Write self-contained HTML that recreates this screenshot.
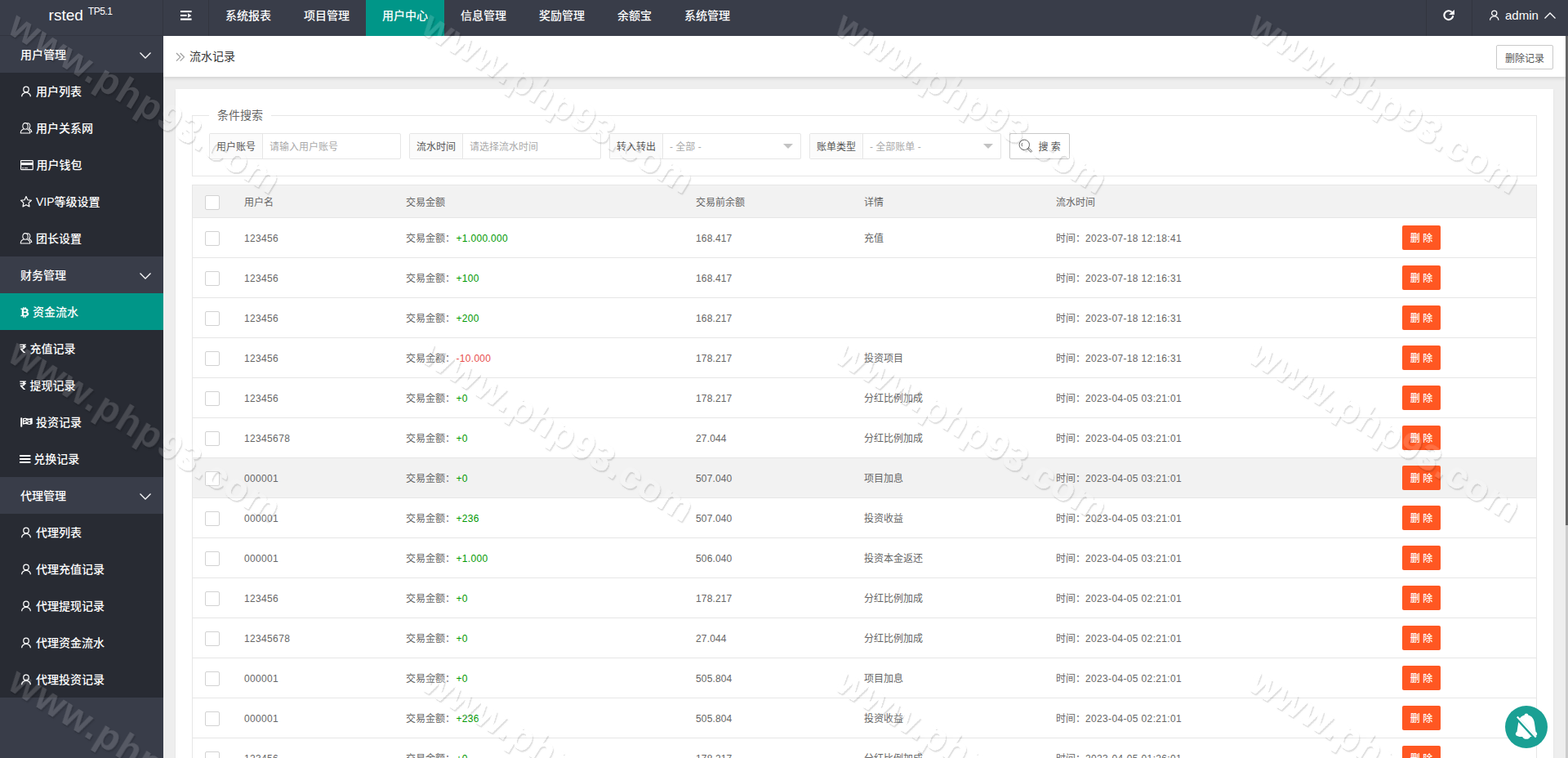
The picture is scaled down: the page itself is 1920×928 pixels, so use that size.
<!DOCTYPE html>
<html lang="zh-CN">
<head>
<meta charset="utf-8">
<title>流水记录</title>
<style>
*{box-sizing:border-box;margin:0;padding:0}
html,body{width:1920px;height:928px;overflow:hidden}
body{font-family:"Liberation Sans","Noto Sans CJK SC",sans-serif;font-size:14px;color:#666;background:#eee;position:relative}
a{text-decoration:none;color:inherit}
ul{list-style:none}
/* header */
.hd{position:absolute;left:0;top:0;width:1920px;height:44px;background:#393D49;z-index:5}
.logo{position:absolute;left:0;top:0;width:200px;padding-right:2px;height:44px;color:#fff;font-size:19px;line-height:38px;text-align:center;border-bottom:1px solid #32353f;border-right:1px solid #32353f}
.logo sup{font-size:12px;position:relative;top:-7px;vertical-align:baseline;margin-left:6px;letter-spacing:-.5px}
.tog{position:absolute;left:200px;top:0;width:56px;height:44px;border-right:1px solid #32353f}
.nav{position:absolute;left:256px;top:0;height:44px;display:flex}
.nav li{font-weight:500;height:44px;line-height:38px;padding:0 20px;color:#fff;font-size:14px}
.nav li.on{background:#009688}
.hr{position:absolute;top:0;height:44px;border-left:1px solid #32353f;color:#fff}
/* side */
.sd{position:absolute;left:0;top:44px;width:200px;height:884px;background:#393D49;z-index:4}
.sd .p{font-weight:500;height:45px;line-height:47px;padding-left:25px;color:#fff;font-size:14px;position:relative}
.sd .c{font-weight:500;height:45px;line-height:47px;padding-left:25px;color:#fff;font-size:14px;background:#282B33;position:relative;white-space:nowrap}
.sd .c.on{background:#009688}
.sd svg{vertical-align:middle;position:relative;top:-1px}
.arr{position:absolute;right:15px;top:16px}
/* main */
.tb{position:absolute;left:200px;top:44px;width:1717px;height:50px;background:#fff;box-shadow:0 2px 4px rgba(0,0,0,.12);z-index:3}
.tb .t{position:absolute;left:32px;top:0;line-height:51px;font-size:14px;color:#333}
.btnp{position:absolute;right:15px;top:11px;height:30px;width:70px;border:1px solid #C9C9C9;border-radius:2px;background:#fff;color:#555;font-size:12px;line-height:32px;text-align:center}
.card{position:absolute;left:215px;top:109px;width:1687px;height:900px;background:#fff;box-shadow:0 1px 2px rgba(0,0,0,.08)}
.fs{position:absolute;left:20px;top:32px;width:1647px;height:75px;border:1px solid #e6e6e6}
.lg{position:absolute;left:20px;top:-11px;padding:0 10px;background:#fff;font-size:14px;line-height:20px;color:#666}
.g{position:absolute;top:21px;height:32px;width:235px;border:1px solid #e6e6e6;border-radius:2px;font-size:12px;line-height:33px}
.g .l{position:absolute;left:0;top:0;width:65px;height:30px;background:#fbfbfb;border-right:1px solid #e6e6e6;text-align:center;color:#555}
.g .i{position:absolute;left:73px;top:0;color:#aaa}
.g .e{position:absolute;right:9px;top:12px;width:0;height:0;border:6px solid transparent;border-top-color:#c2c2c2}
.sb{position:absolute;left:1000px;top:21px;width:74px;height:32px;border:1px solid #C9C9C9;border-radius:2px;font-size:12px;line-height:32px;color:#555;background:#fff}
/* table */
.tbl{position:absolute;left:20px;top:117px;width:1647px;border:1px solid #e6e6e6;border-bottom:0;font-size:12px;color:#666}
.r{position:relative;height:49px;border-bottom:1px solid #e6e6e6;line-height:50px}
.r.h{height:40px;line-height:42px;background:#f2f2f2}
.r.hv{background:#f2f2f2}
.r span{position:absolute;top:0;white-space:nowrap}
.r i.cb{position:absolute;left:15px;top:16px;width:18px;height:18px;border:1px solid #d2d2d2;border-radius:2px;background:#fff}
.r.h i.cb{top:12px}
.c1{left:63px}.c2{left:261px}.c3{left:616px}.c4{left:822px}.c5{left:1057px}
.gr{color:#009900}.rd{color:#e84e4e}
.del{font-weight:500;position:absolute;left:1481px;top:9px;width:47px;height:30px;background:#FF5722;border-radius:2px;color:#fff;font-size:12px;line-height:32px;text-align:center}
.n{letter-spacing:.35px}
.c3.n{letter-spacing:.15px}
b.gr,b.rd{margin-left:1.5px;letter-spacing:.3px}
b{font-weight:normal}
/* scrollbar */
.sc{position:absolute;left:1917px;top:44px;width:3px;height:884px;background:#ccc;z-index:6}
.sc b{display:block;width:3px;height:599px;background:#666}
.bell{position:absolute;left:1843px;top:864px;width:52px;height:52px;border-radius:50%;background:#1AA094;z-index:7}
/* watermark */
.wm{position:absolute;left:0;top:0;width:1920px;height:928px;overflow:hidden;z-index:20;pointer-events:none}

</style>
</head>
<body>
<div class="hd">
  <div class="logo">rsted<sup>TP5.1</sup></div>
  <div class="tog"><svg width="16" height="14" viewBox="0 0 16 14" style="position:absolute;left:21px;top:13px"><rect x="0" y="0" width="13.600" height="2.100" fill="#fff"/><rect x="0" y="4.900" width="7.600" height="2.100" fill="#fff"/><path d="M9.100 3.300l4.300 2.700-4.300 2.700z" fill="#fff"/><rect x="0" y="9.500" width="13.600" height="2.200" fill="#fff"/></svg></div>
  <ul class="nav"><li>系统报表</li><li>项目管理</li><li class="on">用户中心</li><li>信息管理</li><li>奖励管理</li><li>余额宝</li><li>系统管理</li></ul>
  <div class="hr" style="left:1746px;width:56px"><svg width="18" height="18" viewBox="0 0 18 18" style="position:absolute;left:18px;top:8.500px"><path d="M12.600 8.900A5.400 5.400 0 1 1 11 4.600" fill="none" stroke="#fff" stroke-width="2.100" transform="translate(1.600 1.200)"/><path d="M9 8.900L15.900 2.900V8.900z" fill="#fff"/></svg></div>
  <div class="hr" style="left:1802px;width:118px"><svg width="14" height="14" viewBox="0 0 14 14" style="position:absolute;left:19.900px;top:12.100px"><g fill="none" stroke="#fff" stroke-width="1.300" transform="scale(.96)"><circle cx="7" cy="4.350" r="3.250"/><path d="M1.600 13.200a5.400 5 0 0 1 10.800 0"/></g></svg><svg width="16" height="10" viewBox="0 0 16 10" style="position:absolute;left:87px;top:14px"><path d="M1.500 8.500l6.500-6.500 6.500 6.500" fill="none" stroke="#fff" stroke-width="1.300"/></svg><span style="position:absolute;left:40px;top:0;line-height:38px;font-size:15px">admin</span></div>
</div>
<div class="sd">
<div class="p">用户管理<svg width="16" height="10" viewBox="0 0 16 10" style="position:absolute;left:170px;top:19px"><path d="M1.500 1.500l6.500 6.500 6.500-6.500" fill="none" stroke="#fff" stroke-width="1.300"/></svg></div>
<div class="c"><svg width="14" height="16" viewBox="0 0 14 16" style="margin-right:5px"><g fill="none" stroke="#fff" stroke-width="1.250"><circle cx="7" cy="5.450" r="3.250"/><path d="M1.600 14.300a5.400 5 0 0 1 10.800 0"/></g></svg><span>用户列表</span></div>
<div class="c"><svg width="16" height="16" viewBox="0 0 16 16" style="margin-right:4px;margin-left:-1px"><g fill="none" stroke="#fff" stroke-width="1.050" stroke-linejoin="round"><ellipse cx="7" cy="5.400" rx="3.200" ry="3.800"/><path d="M5.300 8.700C3.200 9.400 1.400 10.600 1.200 13.900H12.800C12.600 10.600 10.800 9.400 8.700 8.700"/><path d="M9.400 1.700c2.400-.2 3.700 1.700 3.400 4-.2 1.300-.7 2.100-1.500 2.700 1.900.7 3.300 1.900 3.500 4.100H13.400"/></g></svg><span>用户关系网</span></div>
<div class="c"><svg width="16" height="14" viewBox="0 0 16 14" style="margin-right:4px;margin-left:-.400px"><rect x=".550" y="1.550" width="14.700" height="11.100" rx=".700" fill="none" stroke="#fff" stroke-width="1.150"/><rect x=".600" y="4.100" width="14.600" height="3" fill="#fff"/><rect x="1.900" y="10.300" width="2.300" height=".900" fill="#fff"/><rect x="4.900" y="10.300" width="4.200" height=".900" fill="#fff"/></svg><span>用户钱包</span></div>
<div class="c"><svg width="15" height="15" viewBox="0 0 15 15" style="margin-right:4px"><path d="M7.00 0.60L8.94 4.73L13.47 5.30L10.14 8.42L11.00 12.90L7.00 10.70L3.00 12.90L3.86 8.42L0.53 5.30L5.06 4.73z" fill="none" stroke="#fff" stroke-width="1.200" stroke-linejoin="round"/></svg><span>VIP等级设置</span></div>
<div class="c"><svg width="16" height="16" viewBox="0 0 16 16" style="margin-right:4px;margin-left:-1px"><g fill="none" stroke="#fff" stroke-width="1.050" stroke-linejoin="round"><ellipse cx="7" cy="5.400" rx="3.200" ry="3.800"/><path d="M5.300 8.700C3.200 9.400 1.400 10.600 1.200 13.900H12.800C12.600 10.600 10.800 9.400 8.700 8.700"/><path d="M9.400 1.700c2.400-.2 3.700 1.700 3.400 4-.2 1.300-.7 2.100-1.500 2.700 1.900.7 3.300 1.900 3.500 4.100H13.400"/></g></svg><span>团长设置</span></div>
<div class="p">财务管理<svg width="16" height="10" viewBox="0 0 16 10" style="position:absolute;left:170px;top:19px"><path d="M1.500 1.500l6.500 6.500 6.500-6.500" fill="none" stroke="#fff" stroke-width="1.300"/></svg></div>
<div class="c on"><svg width="11" height="13" viewBox="0 0 11 13" style="margin-right:4px;top:-.400px"><path fill="#fff" transform="scale(.97 .93)" d="M3.4 0h1.3v1.6h1V0H7v1.7c1.7.2 2.9 1 2.9 2.5 0 1-.5 1.8-1.5 2.2 1.4.3 2.2 1.2 2.200 2.500C10.600 10.900 9.200 11.900 7 12.100V14H5.700v-1.800h-1V14H3.400v-1.800H.400v-1.400h.800c.4 0 .6-.2.600-.600V3.600c0-.4-.2-.6-.6-.6H.4V1.600h3zM4.200 3.200v2.700h1.600c1.100 0 1.700-.5 1.700-1.400s-.600-1.300-1.700-1.300zm0 4.200v3.200H6.100c1.300 0 2-.5 2-1.600s-.7-1.600-2-1.600z"/></svg><span>资金流水</span></div>
<div class="c"><svg width="8" height="12" viewBox="0 0 8 12" style="margin-right:4px;margin-left:-.600px;top:-1.400px"><path fill="#fff" transform="scale(.93 .88)" d="M.3.600h8.400L8.200 2.100H6.600c.3.400.5.800.6 1.300h1.500L8.200 4.900H7.200C6.900 6.600 5.500 7.600 3.500 7.800l4.300 4.600H5.300L.9 7.700V6.300h1.600c1.400 0 2.300-.5 2.500-1.400H.3L.8 3.400h4.100C4.600 2.600 3.800 2.100 2.600 2.100H.3z"/></svg><span>充值记录</span></div>
<div class="c"><svg width="8" height="12" viewBox="0 0 8 12" style="margin-right:4px;margin-left:-.600px;top:-1.400px"><path fill="#fff" transform="scale(.93 .88)" d="M.3.600h8.400L8.200 2.100H6.600c.3.400.5.800.6 1.300h1.500L8.200 4.900H7.200C6.900 6.600 5.500 7.600 3.500 7.800l4.300 4.600H5.300L.9 7.700V6.300h1.600c1.400 0 2.300-.5 2.500-1.400H.3L.8 3.400h4.100C4.600 2.600 3.800 2.100 2.600 2.100H.3z"/></svg><span>提现记录</span></div>
<div class="c"><svg width="15" height="12" viewBox="0 0 15 12" style="margin-right:4px;top:-1.300px"><g transform="scale(1 .93)"><rect x=".2" y=".3" width="2" height="12.400" rx=".8" fill="#fff"/><path fill="#fff" fill-rule="evenodd" d="M2.900 1.400c1.600-.900 3-.800 4.500-.2 1.600.6 3.200.800 5 .0.900-.4 2.300-.7 2.300.200V8c0 .500-.300.700-.800.900-1.900.900-3.500.800-5.100.2S5.700 8.200 3.700 9.200c-.4.200-.8 0-.8-.4zM4.100 2.600v1.700c.900-.400 1.800-.5 2.600-.4V2.200c-.9-.2-1.700 0-2.600.400zm5.300.6v1.700c.900.3 1.800.3 2.700 0V3.200c-.9.300-1.800.3-2.700 0zM4.100 5.700v1.800c.9-.4 1.800-.500 2.600-.400V5.300c-.900-.100-1.700 0-2.600.400zm5.300.600v1.800c.900.300 1.800.2 2.700-.100V6.200c-.900.300-1.800.4-2.700.100zM6.700 3.900v1.400c.9.100 1.800.5 2.700 1V4.900c-.9-.5-1.800-.900-2.700-1z"/></g></svg><span>投资记录</span></div>
<div class="c"><svg width="14" height="12" viewBox="0 0 14 12" style="margin-right:3px;margin-left:-.800px"><rect x="0" y="1" width="13.400" height="2" fill="#fff"/><rect x="0" y="5" width="13.400" height="2" fill="#fff"/><rect x="0" y="9" width="13.400" height="2" fill="#fff"/></svg><span>兑换记录</span></div>
<div class="p">代理管理<svg width="16" height="10" viewBox="0 0 16 10" style="position:absolute;left:170px;top:19px"><path d="M1.500 1.500l6.500 6.500 6.500-6.500" fill="none" stroke="#fff" stroke-width="1.300"/></svg></div>
<div class="c"><svg width="14" height="16" viewBox="0 0 14 16" style="margin-right:5px"><g fill="none" stroke="#fff" stroke-width="1.250"><circle cx="7" cy="5.450" r="3.250"/><path d="M1.600 14.300a5.400 5 0 0 1 10.800 0"/></g></svg><span>代理列表</span></div>
<div class="c"><svg width="14" height="16" viewBox="0 0 14 16" style="margin-right:5px"><g fill="none" stroke="#fff" stroke-width="1.250"><circle cx="7" cy="5.450" r="3.250"/><path d="M1.600 14.300a5.400 5 0 0 1 10.800 0"/></g></svg><span>代理充值记录</span></div>
<div class="c"><svg width="14" height="16" viewBox="0 0 14 16" style="margin-right:5px"><g fill="none" stroke="#fff" stroke-width="1.250"><circle cx="7" cy="5.450" r="3.250"/><path d="M1.600 14.300a5.400 5 0 0 1 10.800 0"/></g></svg><span>代理提现记录</span></div>
<div class="c"><svg width="14" height="16" viewBox="0 0 14 16" style="margin-right:5px"><g fill="none" stroke="#fff" stroke-width="1.250"><circle cx="7" cy="5.450" r="3.250"/><path d="M1.600 14.300a5.400 5 0 0 1 10.800 0"/></g></svg><span>代理资金流水</span></div>
<div class="c"><svg width="14" height="16" viewBox="0 0 14 16" style="margin-right:5px"><g fill="none" stroke="#fff" stroke-width="1.250"><circle cx="7" cy="5.450" r="3.250"/><path d="M1.600 14.300a5.400 5 0 0 1 10.800 0"/></g></svg><span>代理投资记录</span></div>
</div>
<div class="tb"><svg width="12" height="12" viewBox="0 0 12 12" style="position:absolute;left:15px;top:19.700px"><path d="M1 1l4.800 4.800-4.800 4.800M5.700 1l4.800 4.800-4.800 4.800" fill="none" stroke="#999" stroke-width="1.100"/></svg><span class="t">流水记录</span><div class="btnp">删除记录</div></div>
<div class="card">
  <div class="fs"><div class="lg">条件搜索</div>
    <div class="g" style="left:20px"><div class="l">用户账号</div><div class="i">请输入用户账号</div></div>
    <div class="g" style="left:265px"><div class="l">流水时间</div><div class="i">请选择流水时间</div></div>
    <div class="g" style="left:510px"><div class="l">转入转出</div><div class="i">- 全部 -</div><div class="e"></div></div>
    <div class="g" style="left:755px"><div class="l">账单类型</div><div class="i">- 全部账单 -</div><div class="e"></div></div>
    <div class="sb"><svg width="18" height="18" viewBox="0 0 18 18" style="position:absolute;left:10.400px;top:5.500px"><g fill="none" stroke="#666" stroke-width="1"><circle cx="7.300" cy="7.300" r="6.200"/><path d="M4.700 5.200a3.600 3.600 0 0 0 0 4"/><path d="M11.500 12.600l1.300-1.300 3.800 3.800-1.300 1.300z"/></g></svg><span style="position:absolute;left:34.5px;top:0">搜 索</span></div>
  </div>
  <div class="tbl">
<div class="r h"><i class="cb"></i><span class="c1">用户名</span><span class="c2">交易金额</span><span class="c3">交易前余额</span><span class="c4">详情</span><span class="c5">流水时间</span></div>
<div class="r"><i class="cb"></i><span class="c1 n">123456</span><span class="c2">交易金额：<b class="gr n">+1.000.000</b></span><span class="c3 n">168.417</span><span class="c4">充值</span><span class="c5">时间：<b class="n">2023-07-18 12:18:41</b></span><div class="del">删 除</div></div>
<div class="r"><i class="cb"></i><span class="c1 n">123456</span><span class="c2">交易金额：<b class="gr n">+100</b></span><span class="c3 n">168.417</span><span class="c4"></span><span class="c5">时间：<b class="n">2023-07-18 12:16:31</b></span><div class="del">删 除</div></div>
<div class="r"><i class="cb"></i><span class="c1 n">123456</span><span class="c2">交易金额：<b class="gr n">+200</b></span><span class="c3 n">168.217</span><span class="c4"></span><span class="c5">时间：<b class="n">2023-07-18 12:16:31</b></span><div class="del">删 除</div></div>
<div class="r"><i class="cb"></i><span class="c1 n">123456</span><span class="c2">交易金额：<b class="rd n">-10.000</b></span><span class="c3 n">178.217</span><span class="c4">投资项目</span><span class="c5">时间：<b class="n">2023-07-18 12:16:31</b></span><div class="del">删 除</div></div>
<div class="r"><i class="cb"></i><span class="c1 n">123456</span><span class="c2">交易金额：<b class="gr n">+0</b></span><span class="c3 n">178.217</span><span class="c4">分红比例加成</span><span class="c5">时间：<b class="n">2023-04-05 03:21:01</b></span><div class="del">删 除</div></div>
<div class="r"><i class="cb"></i><span class="c1 n">12345678</span><span class="c2">交易金额：<b class="gr n">+0</b></span><span class="c3 n">27.044</span><span class="c4">分红比例加成</span><span class="c5">时间：<b class="n">2023-04-05 03:21:01</b></span><div class="del">删 除</div></div>
<div class="r hv"><i class="cb"></i><span class="c1 n">000001</span><span class="c2">交易金额：<b class="gr n">+0</b></span><span class="c3 n">507.040</span><span class="c4">项目加息</span><span class="c5">时间：<b class="n">2023-04-05 03:21:01</b></span><div class="del">删 除</div></div>
<div class="r"><i class="cb"></i><span class="c1 n">000001</span><span class="c2">交易金额：<b class="gr n">+236</b></span><span class="c3 n">507.040</span><span class="c4">投资收益</span><span class="c5">时间：<b class="n">2023-04-05 03:21:01</b></span><div class="del">删 除</div></div>
<div class="r"><i class="cb"></i><span class="c1 n">000001</span><span class="c2">交易金额：<b class="gr n">+1.000</b></span><span class="c3 n">506.040</span><span class="c4">投资本金返还</span><span class="c5">时间：<b class="n">2023-04-05 03:21:01</b></span><div class="del">删 除</div></div>
<div class="r"><i class="cb"></i><span class="c1 n">123456</span><span class="c2">交易金额：<b class="gr n">+0</b></span><span class="c3 n">178.217</span><span class="c4">分红比例加成</span><span class="c5">时间：<b class="n">2023-04-05 02:21:01</b></span><div class="del">删 除</div></div>
<div class="r"><i class="cb"></i><span class="c1 n">12345678</span><span class="c2">交易金额：<b class="gr n">+0</b></span><span class="c3 n">27.044</span><span class="c4">分红比例加成</span><span class="c5">时间：<b class="n">2023-04-05 02:21:01</b></span><div class="del">删 除</div></div>
<div class="r"><i class="cb"></i><span class="c1 n">000001</span><span class="c2">交易金额：<b class="gr n">+0</b></span><span class="c3 n">505.804</span><span class="c4">项目加息</span><span class="c5">时间：<b class="n">2023-04-05 02:21:01</b></span><div class="del">删 除</div></div>
<div class="r"><i class="cb"></i><span class="c1 n">000001</span><span class="c2">交易金额：<b class="gr n">+236</b></span><span class="c3 n">505.804</span><span class="c4">投资收益</span><span class="c5">时间：<b class="n">2023-04-05 02:21:01</b></span><div class="del">删 除</div></div>
<div class="r"><i class="cb"></i><span class="c1 n">123456</span><span class="c2">交易金额：<b class="gr n">+0</b></span><span class="c3 n">178.217</span><span class="c4">分红比例加成</span><span class="c5">时间：<b class="n">2023-04-05 01:26:01</b></span><div class="del">删 除</div></div>
</div>
</div>
<div class="sc"><b></b></div>
<div class="bell"><svg width="52" height="52" viewBox="0 0 52 52" style="display:block"><path fill="#fff" d="M26 9.600c1.300 0 2.200.9 2.300 2 4.200 1 6.900 4.500 7.600 9.300l1.600 10.900c.8.700 1.700 1.700 1.700 3 0 1.500-1.700 2.500-4.700 3.100h-3.600c-1 1.900-2.900 2.900-4.900 2.900s-3.900-1-4.900-2.900h-3.600c-3-.6-4.700-1.600-4.700-3.100 0-1.300.9-2.300 1.700-3l1.600-10.900c.7-4.800 3.400-8.300 7.600-9.300.1-1.100 1-2 2.300-2z"/><path d="M14 14.500L37 39.500" stroke="#1AA094" stroke-width="4.200"/><path d="M14.800 13.600L37.800 38.600" stroke="#fff" stroke-width="2.200"/></svg></div>
<svg class="wm" width="1920" height="928" viewBox="0 0 1920 928">
<defs><filter id="wf" x="0" y="0" width="1920" height="928" filterUnits="userSpaceOnUse" color-interpolation-filters="sRGB">
<feComponentTransfer in="SourceAlpha" result="sa"><feFuncA type="linear" slope="20"/></feComponentTransfer>
<feOffset in="sa" dx="0.9" dy="1.6" result="o"/>
<feGaussianBlur in="o" stdDeviation="0.7" result="b1"/>
<feGaussianBlur in="o" stdDeviation="0.9" result="b2"/>
<feComposite in="b1" in2="sa" operator="out" result="e1"/>
<feComposite in="b2" in2="sa" operator="out" result="e2"/>
<feFlood flood-color="#000" flood-opacity="0.08" result="f1"/>
<feFlood flood-color="#000" flood-opacity="0.06" result="f2"/>
<feComposite in="f1" in2="e1" operator="in" result="s1"/>
<feComposite in="f2" in2="e2" operator="in" result="s2"/>
<feMerge><feMergeNode in="s2"/><feMergeNode in="s1"/><feMergeNode in="SourceGraphic"/></feMerge>
</filter></defs>
<g filter="url(#wf)" fill="#fff" fill-opacity=".15" font-family="Liberation Sans, sans-serif" font-size="46" font-weight="bold" letter-spacing="1.5">
<text transform="translate(7.5 39.2) rotate(31.6)">www.php93.com</text>
<text transform="translate(513.7 39.2) rotate(31.6)">www.php93.com</text>
<text transform="translate(1019.9 39.2) rotate(31.6)">www.php93.com</text>
<text transform="translate(1526.1 39.2) rotate(31.6)">www.php93.com</text>
<text transform="translate(7.5 440.9) rotate(31.6)">www.php93.com</text>
<text transform="translate(513.7 440.9) rotate(31.6)">www.php93.com</text>
<text transform="translate(1019.9 440.9) rotate(31.6)">www.php93.com</text>
<text transform="translate(1526.1 440.9) rotate(31.6)">www.php93.com</text>
<text transform="translate(7.5 842.6) rotate(31.6)">www.php93.com</text>
<text transform="translate(513.7 842.6) rotate(31.6)">www.php93.com</text>
<text transform="translate(1019.9 842.6) rotate(31.6)">www.php93.com</text>
<text transform="translate(1526.1 842.6) rotate(31.6)">www.php93.com</text>
</g></svg>
</body>
</html>
